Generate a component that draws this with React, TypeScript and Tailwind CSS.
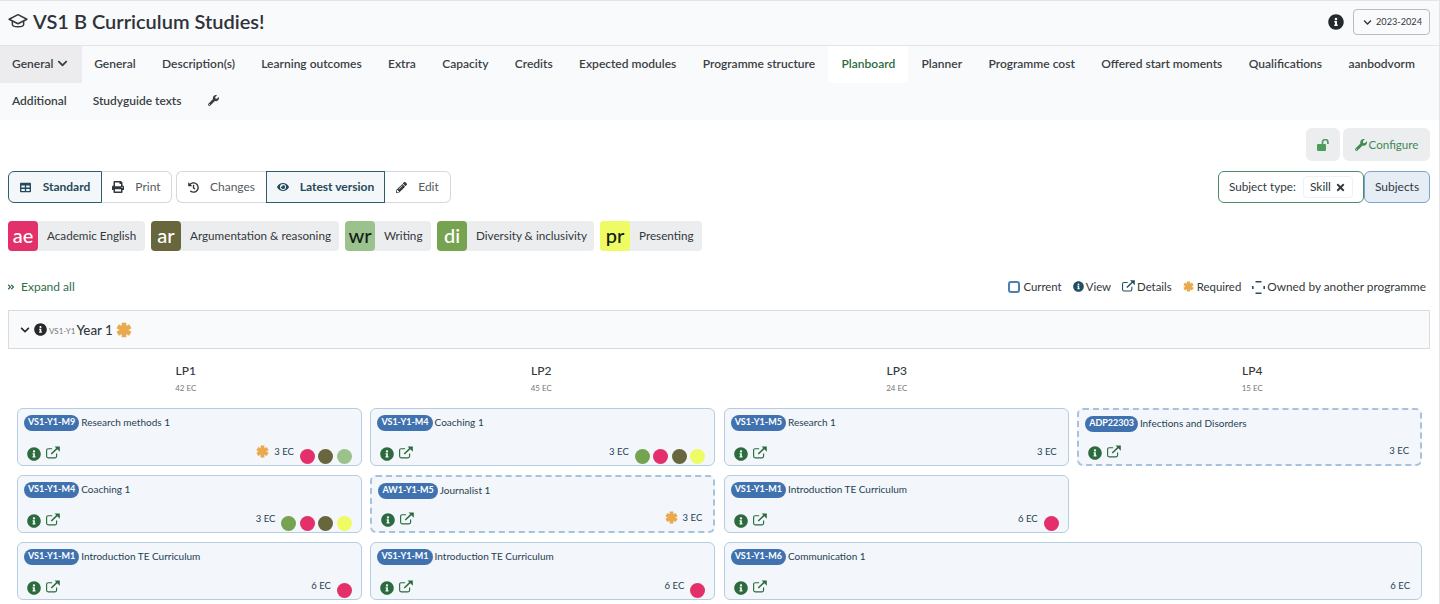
import {
  FaChevronDown,
  FaEye,
  FaHistory,
  FaInfoCircle,
  FaPencilAlt,
  FaPrint,
  FaTable,
  FaTimes,
  FaWrench,
  FaAngleDoubleRight,
} from 'react-icons/fa';

const tabsTop = [
  'General',
  'Description(s)',
  'Learning outcomes',
  'Extra',
  'Capacity',
  'Credits',
  'Expected modules',
  'Programme structure',
  'Planboard',
  'Planner',
  'Programme cost',
  'Offered start moments',
  'Qualifications',
  'aanbodvorm',
];

const pink = 'bg-[#e3306a]';
const olive = 'bg-[#67663d]';
const sage = 'bg-[#9bc28d]';
const green = 'bg-[#76a350]';
const yellow = 'bg-[#eefb63]';

const chips = [
  { code: 'ae', label: 'Academic English', bg: pink, fg: 'text-white', w: 'w-[137px]' },
  { code: 'ar', label: 'Argumentation & reasoning', bg: olive, fg: 'text-white', w: 'w-[188px]' },
  { code: 'wr', label: 'Writing', bg: sage, fg: 'text-[#14201a]', w: 'w-[86px]' },
  { code: 'di', label: 'Diversity & inclusivity', bg: green, fg: 'text-white', w: 'w-[157px]' },
  { code: 'pr', label: 'Presenting', bg: yellow, fg: 'text-[#14201a]', w: 'w-[102px]' },
];

function Star({ className = '' }: { className?: string }) {
  return (
    <svg viewBox="0 0 24 24" className={className} fill="none" stroke="currentColor" strokeWidth={7}>
      <path d="M12 1v22M2.5 6.5l19 11M2.5 17.5l19-11" />
    </svg>
  );
}

function ExtLink({ className = '' }: { className?: string }) {
  return (
    <svg viewBox="0 0 16 14" className={className} fill="none" stroke="currentColor" strokeWidth={1.3}>
      <path d="M7 2.7H2.5A1.8 1.8 0 0 0 .7 4.5v6.8a1.8 1.8 0 0 0 1.8 1.8h7.8a1.8 1.8 0 0 0 1.8-1.8V8" />
      <path d="M6 8.8 13 2" strokeWidth={1.7} />
      <path d="M9.8 0h6v6z" fill="currentColor" stroke="none" />
    </svg>
  );
}

function Cap({ className = '' }: { className?: string }) {
  return (
    <svg viewBox="0 0 22 18" className={className} fill="none" stroke="currentColor" strokeWidth={1.6}>
      <path d="M11 1.5 20.8 6.5 11 11.5 1.2 6.5Z" strokeLinejoin="round" />
      <path d="M4.8 8.5v3.8c0 3.4 12.4 3.4 12.4 0V8.5" />
    </svg>
  );
}

function OpenLock({ className = '' }: { className?: string }) {
  return (
    <svg viewBox="0 0 13 12" className={className} fill="currentColor">
      <rect x="0" y="5" width="9" height="7" rx="1" />
      <path d="M5.5 5.5V3.2a2.7 2.7 0 0 1 5.4 0V5" fill="none" stroke="currentColor" strokeWidth="1.7" />
    </svg>
  );
}

function OwnedBox({ className = '' }: { className?: string }) {
  return (
    <svg viewBox="0 0 13 13" className={className} fill="none" stroke="currentColor" strokeWidth={1.6}>
      <path d="M3.5.8h6M3.5 12.2h6M.8 5v3M12.2 5v3" />
    </svg>
  );
}

type CardProps = {
  code: string;
  title: string;
  ec: string;
  dots?: string[];
  required?: boolean;
  dashed?: boolean;
  className?: string;
};

function Card({ code, title, ec, dots = [], required, dashed, className = '' }: CardProps) {
  return (
    <div
      className={`flex h-[58px] flex-col justify-between rounded-md bg-[#f3f6fa] px-[6px] pt-[6px] pb-[1px] text-[#1f4152] ${
        dashed ? 'border-2 border-dashed border-[#a6c2dc]' : 'border border-[#b5cde3]'
      } ${className}`}
    >
      <div className="flex items-center gap-[2px] text-[10px] leading-[14px]">
        <span className="rounded-full bg-[#3f72af] px-[4px] pb-[2px] text-[9px] font-bold leading-[14px] text-white">
          {code}
        </span>
        <span className="pb-[2px]">{title}</span>
      </div>
      <div className="flex items-end justify-between pl-[3px] pr-[3px]">
        <div className="flex items-center gap-[5px] pb-[2px] text-[#2b6b3d]">
          <FaInfoCircle className="h-[14px] w-[14px]" />
          <ExtLink className="mb-[3px] h-[13px] w-[14px]" />
        </div>
        <div className="flex items-end">
          {required && <Star className="mb-[6px] mr-[5px] h-[13px] w-[13px] text-[#e9a94f]" />}
          <span className={`mb-[4px] text-[9.5px] leading-4 ${dots.length === 0 ? 'mr-[2px]' : ''}`}>{ec}</span>
          {dots.length > 0 && (
            <div className="ml-[6px] flex gap-[3.5px]">
              {dots.map((d, i) => (
                <span key={i} className={`h-[15px] w-[15px] rounded-full ${d}`} />
              ))}
            </div>
          )}
        </div>
      </div>
    </div>
  );
}

function Period({ name, ec }: { name: string; ec: string }) {
  return (
    <div className="flex flex-col items-center text-[#33383d]">
      <span className="text-xs font-medium leading-4">{name}</span>
      <span className="mt-[3px] text-[8px] leading-3 text-[#777]">{ec}</span>
    </div>
  );
}

export default function App() {
  return (
    <div
      className="h-[604px] overflow-hidden border-r border-t border-[#e3e5e8] bg-white text-[#33383d]"
      style={{ fontFamily: '"Lato", "Noto Sans", sans-serif' }}
    >
      <header className="flex h-[45px] items-center justify-between border-b border-[#e3e5e8] bg-[#f9fafc] pl-2 pr-[9px]">
        <div className="flex items-center gap-[5px] pb-1">
          <Cap className="h-[17px] w-[20px]" />
          <h1 className="text-xl font-semibold text-[#2f3338]">VS1 B Curriculum Studies!</h1>
        </div>
        <div className="flex items-center gap-[9px] pb-[2px]">
          <FaInfoCircle className="h-4 w-4 text-[#26292c]" />
          <button className="flex h-[26px] w-[77px] items-center justify-center gap-[4px] rounded border border-[#b9bcc0] pl-[2px] text-[9.2px]">
            <FaChevronDown className="h-[9px] w-[9px]" />
            2023-2024
          </button>
        </div>
      </header>

      <nav className="h-[74px] bg-[#f9fafc] text-[12px] font-semibold text-[#3a3f44]">
        <div className="flex h-[37px]">
          <div className="-mr-[1px] flex w-[82px] items-center gap-1 bg-[#ececee] pb-[2px] pl-3">
            General <FaChevronDown className="h-[11px] w-[11px]" />
          </div>
          {tabsTop.map((t) => (
            <div
              key={t}
              className={`flex items-center px-[13.2px] pb-[2px] ${t === 'Planboard' ? 'bg-white text-[#2b6b3d]' : ''}`}
            >
              {t}
            </div>
          ))}
        </div>
        <div className="flex h-[37px]">
          <div className="flex items-center pb-[2px] pl-3 pr-[13px]">Additional</div>
          <div className="flex items-center px-[13px] pb-[2px]">Studyguide texts</div>
          <div className="flex items-center px-[13px] pb-[2px]">
            <FaWrench className="h-[11px] w-[11px]" />
          </div>
        </div>
      </nav>

      <main className="pl-2 pr-[9px] pt-2">
        <div className="flex justify-end gap-[3px]">
          <button className="flex h-[33px] w-[34px] items-center justify-center rounded-md bg-[#ecedef] text-[#4f9c5f]">
            <OpenLock className="h-3 w-[13px]" />
          </button>
          <button className="flex h-[33px] w-[87px] items-center justify-center gap-[2px] rounded-md bg-[#ecedef] text-[11.6px] text-[#3d8a55]">
            <FaWrench className="h-3 w-3" />
            Configure
          </button>
        </div>

        <div className="mt-[10px] flex items-start justify-between text-xs">
          <div className="flex gap-1">
            <div className="flex text-[#555b60]">
              <button className="flex h-8 w-[94px] items-center justify-center gap-[12px] rounded-l-md border border-[#2e5e6e] bg-[#f3f7fa] font-bold text-[#24495a]">
                <FaTable className="h-[11px] w-[11px]" />
                Standard
              </button>
              <button className="flex h-8 w-[70px] items-center justify-center gap-[11px] rounded-r-md border border-l-0 border-[#d5d8dc]">
                <FaPrint className="h-3 w-3 text-[#33383d]" />
                Print
              </button>
            </div>
            <div className="flex text-[#555b60]">
              <button className="flex h-8 w-[90px] items-center justify-center gap-[11px] rounded-l-md border border-r-0 border-[#d5d8dc]">
                <FaHistory className="h-[11px] w-[11px] text-[#33383d]" />
                Changes
              </button>
              <button className="flex h-8 w-[119px] items-center justify-center gap-[11px] border border-[#2e5e6e] bg-[#f3f7fa] font-bold text-[#24495a]">
                <FaEye className="h-3 w-3" />
                Latest version
              </button>
              <button className="flex h-8 w-[66px] items-center justify-center gap-[11px] rounded-r-md border border-l-0 border-[#d5d8dc]">
                <FaPencilAlt className="h-[11px] w-[11px] text-[#33383d]" />
                Edit
              </button>
            </div>
          </div>
          <div className="flex">
            <div className="flex h-8 w-[146px] items-center gap-[7px] rounded-md border border-[#4b8b66] pl-[10px] text-[11.7px]">
              Subject type:
              <span className="flex h-[22px] items-center gap-1 rounded border border-[#eef1f5] px-[6px] text-xs">
                Skill <FaTimes className="h-[11px] w-[11px]" />
              </span>
            </div>
            <button className="h-8 w-[66px] rounded-md border border-[#7ba3cf] bg-[#e6edf5]">Subjects</button>
          </div>
        </div>

        <div className="mt-[18px] flex gap-[6px] text-[11.7px]">
          {chips.map((c) => (
            <div key={c.code} className={`flex h-[30px] items-center rounded bg-[#ecedef] ${c.w}`}>
              <span
                className={`flex h-[30px] w-[30px] items-center justify-center rounded pb-[2px] text-xl font-medium leading-none ${c.bg} ${c.fg}`}
              >
                {c.code}
              </span>
              <span className="ml-[9px]">{c.label}</span>
            </div>
          ))}
        </div>

        <div className="mt-[27px] flex h-[18px] items-center justify-between pr-[4px] text-xs">
          <div className="flex items-center gap-[6px] text-[#2f7048]">
            <FaAngleDoubleRight className="-ml-px h-2 w-2" />
            Expand all
          </div>
          <div className="flex items-center gap-[11px] text-[11.4px] text-[#33383d]">
            <span className="flex items-center gap-[3px]">
              <span className="h-[12px] w-[12px] rounded-[3px] border-2 border-[#4d7fb5]" />
              Current
            </span>
            <span className="flex items-center gap-[2px]">
              <FaInfoCircle className="h-[11px] w-[11px] text-[#1f4f60]" />
              View
            </span>
            <span className="flex items-center gap-[2px]">
              <ExtLink className="mb-[2px] h-3 w-[13px] text-[#1f4f60]" />
              Details
            </span>
            <span className="flex items-center gap-[3px]">
              <Star className="h-[11px] w-[11px] text-[#e9a94f]" />
              Required
            </span>
            <span className="flex items-center gap-[2px] text-[11.8px]">
              <OwnedBox className="h-[13px] w-[13px] text-[#1f4f60]" />
              Owned by another programme
            </span>
          </div>
        </div>

        <div className="mt-[14px] flex h-[39px] items-center border border-[#d8dadd] bg-[#f9fafc] pl-[11px]">
          <FaChevronDown className="h-[10px] w-[10px] text-[#26292c]" />
          <FaInfoCircle className="ml-[4px] h-[13px] w-[13px] text-[#26292c]" />
          <span className="ml-[2px] mt-[2px] text-[8px] text-[#777]">VS1-Y1</span>
          <span className="ml-[1px] mt-[2px] text-[13.4px] font-medium">Year 1</span>
          <Star className="ml-[3px] h-4 w-4 text-[#e9a94f]" />
        </div>

        <div className="mt-[14px] grid grid-cols-4">
          <Period name="LP1" ec="42 EC" />
          <Period name="LP2" ec="45 EC" />
          <Period name="LP3" ec="24 EC" />
          <Period name="LP4" ec="15 EC" />
        </div>

        <div className="mt-[14px] grid grid-cols-4 gap-x-[8.5px] gap-y-[9px] pl-[9px] pr-[8px]">
          <Card code="VS1-Y1-M9" title="Research methods 1" ec="3 EC" required dots={[pink, olive, sage]} />
          <Card code="VS1-Y1-M4" title="Coaching 1" ec="3 EC" dots={[green, pink, olive, yellow]} />
          <Card code="VS1-Y1-M5" title="Research 1" ec="3 EC" />
          <Card code="ADP22303" title="Infections and Disorders" ec="3 EC" dashed />
          <Card code="VS1-Y1-M4" title="Coaching 1" ec="3 EC" dots={[green, pink, olive, yellow]} />
          <Card code="AW1-Y1-M5" title="Journalist 1" ec="3 EC" required dashed />
          <Card code="VS1-Y1-M1" title="Introduction TE Curriculum" ec="6 EC" dots={[pink]} />
          <div />
          <Card code="VS1-Y1-M1" title="Introduction TE Curriculum" ec="6 EC" dots={[pink]} />
          <Card code="VS1-Y1-M1" title="Introduction TE Curriculum" ec="6 EC" dots={[pink]} />
          <Card code="VS1-Y1-M6" title="Communication 1" ec="6 EC" className="col-span-2" />
        </div>
      </main>
    </div>
  );
}
